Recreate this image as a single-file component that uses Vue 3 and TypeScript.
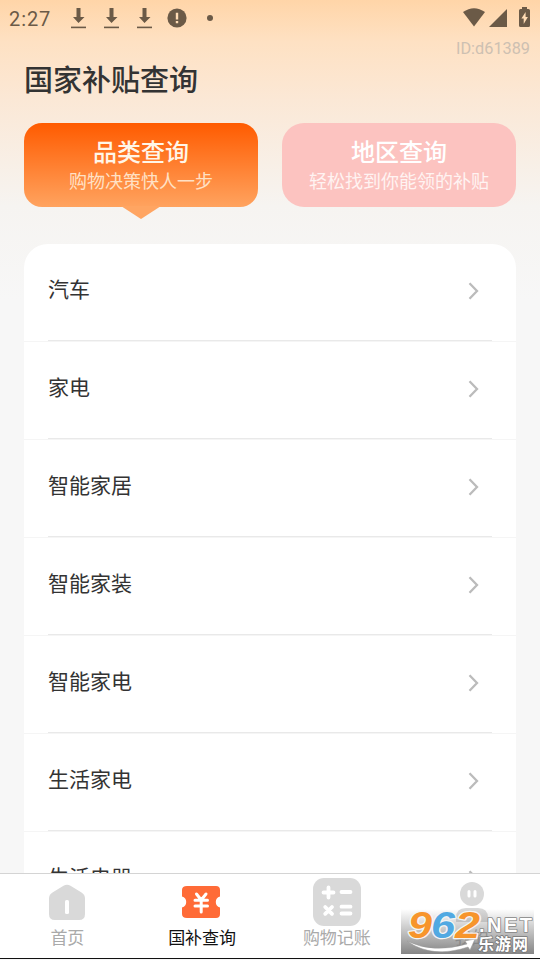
<script setup lang="ts">
interface Mode {
  title: string
  hint: string
}
const modes: Mode[] = [
  { title: '品类查询', hint: '购物决策快人一步' },
  { title: '地区查询', hint: '轻松找到你能领的补贴' },
]
const categories: string[] = ['汽车', '家电', '智能家居', '智能家装', '智能家电', '生活家电', '生活电器']
</script>

<template>
  <div class="screen">
    <header class="status">
      <span class="clock">2:27</span>
      <svg v-for="n in 3" :key="n" class="download" width="15" height="21" viewBox="0 0 15 21">
        <path d="M5.500 0h4v9h4L7.500 15 2 9h3.500z" />
        <path d="M0 18.600h15v1.600H0z" />
      </svg>
      <svg class="alert" width="20" height="20" viewBox="0 0 20 20">
        <circle cx="10" cy="10" r="9.600" />
        <path class="cut" d="M8.800 4.800h2.400v6.700H8.800zM8.800 13h2.400v2.300H8.800z" />
      </svg>
      <i class="dot"></i>
      <span class="spacer"></span>
      <svg class="wifi" width="22" height="19" viewBox="0 0 22 19">
        <path d="M0 4Q11-3.600 22 4L11 18.500z" />
      </svg>
      <svg class="signal" width="18" height="18" viewBox="0 0 18 18"><path d="M18 0v18H0z" /></svg>
      <svg class="battery" width="11" height="20" viewBox="0 0 11 20">
        <path d="M3 0h5v2h1.500Q11 2 11 3.500v15Q11 20 9.500 20h-8Q0 20 0 18.500v-15Q0 2 1.500 2H3z" />
        <path class="cut" d="M6.600 5L2.400 11.500h2.300V17L8.900 10H6.600z" />
      </svg>
    </header>
    <div class="user-id">ID:d61389</div>
    <h1>国家补贴查询</h1>

    <nav class="modes">
      <button v-for="(mode, i) in modes" :key="mode.title" class="mode" :class="i === 0 ? 'chosen' : 'idle'">
        <b>{{ mode.title }}</b>
        <span>{{ mode.hint }}</span>
      </button>
    </nav>

    <main class="list">
      <div v-for="name in categories" :key="name" class="row">
        <div class="row-body">
          <span>{{ name }}</span>
          <svg width="12" height="20" viewBox="0 0 12 20"><path d="M1.500 2.200l7.500 7.800-7.500 7.800" /></svg>
        </div>
      </div>
    </main>

    <footer class="tabs">
      <div class="tab">
        <svg width="48" height="48" viewBox="0 0 48 48">
          <path class="grey" d="M20.500 7.800Q24 5.800 27.500 7.800L38.500 14.500Q42 16.600 42 20.500V36Q42 42 36 42H12Q6 42 6 36V20.500Q6 16.600 9.500 14.500z" />
          <rect class="white" x="22" y="22" width="4" height="14" rx="1.500" />
        </svg>
        <span>首页</span>
      </div>
      <div class="tab active">
        <svg width="48" height="48" viewBox="0 0 48 48">
          <path class="orange" d="M9 8H38Q42 8 42 12V18.500A5.700 5.700 0 0 0 42 29.500V36Q42 40 38 40H9Q4 40 4 36V29.500A5.700 5.700 0 0 0 4 18.500V12Q4 8 9 8z" />
          <path class="yen" d="M18.500 16L23.200 22 28 16M17 22.300H29.500M17 28H29.500M23.200 22V34" />
        </svg>
        <span>国补查询</span>
      </div>
      <div class="tab">
        <svg width="48" height="48" viewBox="0 0 48 48">
          <rect class="grey" width="48" height="48" rx="11" />
          <path class="maths" d="M15.500 9.500V19.500M10.500 14.500H20.500M28.500 14H37.500M12.200 29L19 35.800M19 29L12.200 35.800M28.500 28.700H37.500M28.500 35.500H37.500" />
        </svg>
        <span>购物记账</span>
      </div>
      <div class="tab">
        <svg width="48" height="48" viewBox="0 0 48 48">
          <circle class="grey" cx="24" cy="16" r="12" />
          <path class="eyes" d="M21 13.500V18M27 13.500V18" />
          <path class="grey" d="M8 40Q8 30 18 30H30Q40 30 40 40V44H8z" />
        </svg>
        <span>我的</span>
      </div>
    </footer>
    <div class="edge"></div>

    <div class="watermark">
      <svg width="133" height="50" viewBox="0 0 133 50">
        <path class="swoosh" d="M6 37Q32 50 66 40L64 37 74 35 69 46 67 43Q31 55 6 37z" />
        <g class="digits" font-size="36">
          <text class="amber" x="7" y="34" textLength="24" lengthAdjust="spacingAndGlyphs">9</text>
          <text class="blue" x="30" y="34" textLength="24" lengthAdjust="spacingAndGlyphs">6</text>
          <text class="amber" x="54" y="34" textLength="25" lengthAdjust="spacingAndGlyphs">2</text>
        </g>
        <text class="net" x="78" y="28" textLength="53">.NET</text>
        <text class="name" x="77" y="46" textLength="50">乐游网</text>
      </svg>
    </div>
  </div>
</template>

<style>
body {
  margin: 0;
}
</style>

<style scoped>
.screen {
  position: relative;
  display: flex;
  flex-direction: column;
  width: 540px;
  height: 960px;
  overflow: hidden;
  background: linear-gradient(#ffd5a8 0, #fee1c3 42px, #fbe8d6 100px, #f6f4f1 206px, #f7f7f7 300px);
  font-family: Roboto, "Noto Sans CJK SC", sans-serif;
  color: #333;
}
.status {
  display: flex;
  align-items: flex-start;
  box-sizing: border-box;
  height: 38px;
  padding: 7px 10px 0 9px;
  flex: none;
  fill: #6b5a47;
}
.clock {
  width: 62px;
  font-size: 20px;
  line-height: 24px;
  letter-spacing: 0.9px;
  color: #6b5a47;
}
.download {
  margin: 1px 18px 0 0;
}
.alert {
  margin: 1px 0 0 -3px;
}
.cut {
  fill: #ffdcb5;
}
.dot {
  width: 6px;
  height: 6px;
  margin: 8px 0 0 20px;
  border-radius: 50%;
  background: #6b5a47;
}
.spacer {
  flex: 1;
}
.wifi {
  margin: 1px 4px 0 0;
}
.signal {
  margin: 2px 12px 0 0;
}
.user-id {
  height: 20px;
  padding-right: 10px;
  font-size: 16.3px;
  line-height: 21px;
  text-align: right;
  color: #cdc0b2;
}
h1 {
  margin: 0 24px;
  height: 44px;
  font-size: 29px;
  font-weight: 500;
  line-height: 46px;
}
.modes {
  display: flex;
  gap: 24px;
  margin: 21px 24px 0;
}
.mode {
  position: relative;
  display: flex;
  flex: 1;
  flex-direction: column;
  align-items: center;
  box-sizing: border-box;
  height: 84px;
  padding: 14px 0 0;
  border: 0;
  border-radius: 18px;
  font-family: inherit;
  color: #fff;
}
.mode b {
  font-size: 24px;
  font-weight: 500;
  line-height: 32px;
}
.mode span {
  font-size: 18px;
  line-height: 26px;
}
.chosen {
  background: linear-gradient(#ff5b00, #ffa35f);
}
.chosen b {
  color: #fff6e8;
}
.chosen span {
  color: #ffe1c5;
}
.chosen::after {
  content: "";
  position: absolute;
  left: 97px;
  top: 83px;
  width: 40px;
  height: 13px;
  background: #ffa562;
  clip-path: polygon(0 0, 100% 0, 50% 100%);
}
.idle {
  border-radius: 22px;
  background: #fcc3c0;
}
.idle span {
  color: #fff3f2;
}
.list {
  flex: 1;
  min-height: 0;
  margin: 37px 24px 0;
  overflow: hidden;
  border-radius: 24px 24px 0 0;
  background: #fff;
}
.row {
  box-sizing: border-box;
  height: 98px;
  padding: 0 24px;
  border-bottom: 1px solid #f5f5f5;
}
.row-body {
  display: flex;
  align-items: center;
  justify-content: space-between;
  box-sizing: border-box;
  height: 97px;
  padding: 0 12px 3px 0;
  border-bottom: 1px solid #e9e9e9;
  font-size: 21px;
}
.row-body span {
  padding-bottom: 6px;
}
.row-body svg {
  fill: none;
  stroke: #bbb;
  stroke-width: 2.3;
}
.tabs {
  display: flex;
  flex: none;
  box-sizing: border-box;
  height: 85px;
  padding-right: 1px;
  border-top: 1px solid #d4d4d4;
  background: #fff;
}
.tab {
  display: flex;
  flex: 1;
  flex-direction: column;
  align-items: center;
  padding-top: 4px;
  font-size: 17px;
  line-height: 25px;
  color: #aaa;
}
.active {
  color: #111;
}
.grey {
  fill: #d9d9d9;
}
.white {
  fill: #fff;
}
.orange {
  fill: #ff6b37;
}
.yen,
.maths,
.eyes {
  fill: none;
  stroke: #fff;
  stroke-width: 3;
  stroke-linecap: round;
}
.maths {
  stroke-width: 3.8;
}
.edge {
  flex: none;
  height: 1px;
  margin-bottom: 1px;
  background: #111;
}
.watermark {
  position: absolute;
  left: 401px;
  top: 904px;
  width: 133px;
  height: 50px;
  background: linear-gradient(rgba(130, 130, 130, 0) 10%, rgba(120, 120, 120, 0.9));
}
.watermark svg {
  display: block;
}
.watermark text {
  font-weight: 700;
  paint-order: stroke;
  stroke-linejoin: round;
}
.digits {
  font-family: "Liberation Sans", sans-serif;
  font-style: italic;
  stroke: #f4f4f4;
  stroke-width: 2.5;
}
.amber {
  fill: #f7952c;
}
.blue {
  fill: #51a9e2;
}
.net {
  font-family: "Liberation Sans", sans-serif;
  font-size: 20px;
  fill: #fff;
  stroke: #858585;
  stroke-width: 1.6;
}
.name {
  font-size: 16px;
  fill: #fff;
  stroke: #777;
  stroke-width: 1.6;
}
.swoosh {
  fill: #fff;
  stroke: #999;
  stroke-width: 0.5;
}
</style>
